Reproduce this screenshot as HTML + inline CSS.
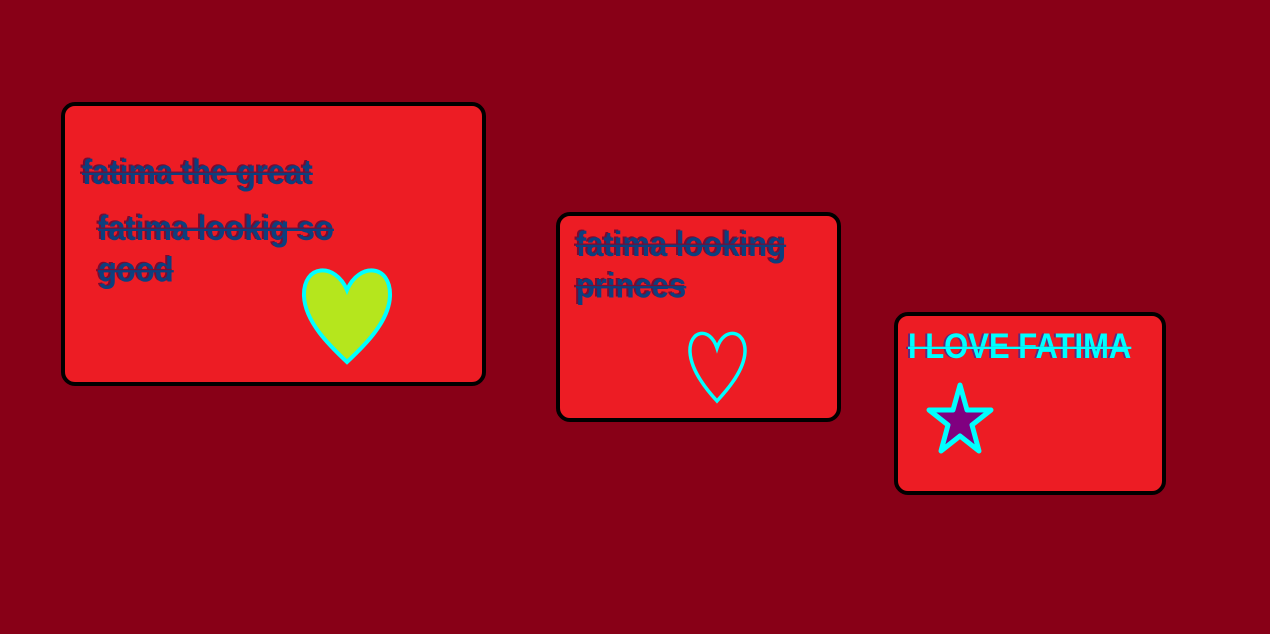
<!DOCTYPE html>
<html><head><style>
body{margin:0;width:1270px;height:634px;background:#880017;position:relative;overflow:hidden;font-family:"Liberation Sans",sans-serif}
.card{position:absolute;background:#ed1c24;border:4.5px solid #000;border-radius:14px;box-sizing:border-box}
.t{position:absolute;font-weight:bold;font-size:31px;color:#0d3f7e;text-decoration:line-through;text-decoration-thickness:2px;text-shadow:-2px -1px 0 #7a0a30;white-space:nowrap;transform-origin:0 0;transform:scaleY(1.15);line-height:36px}
</style></head><body>
<div class="card" style="left:61px;top:102px;width:425px;height:284px"></div>
<div class="card" style="left:556px;top:212px;width:285px;height:210px"></div>
<div class="card" style="left:894px;top:312px;width:272px;height:183px"></div>
<div class="t" style="left:82px;top:152px">fatima the great</div>
<div class="t" style="left:98px;top:208px;width:250px;white-space:normal">fatima lookig so good</div>
<div class="t" style="left:576px;top:224px;width:220px;white-space:normal">fatima looking princes</div>
<div class="t" style="left:908px;top:326px;color:#0ff;text-shadow:-2px 0 0 #5a2a80">I LOVE FATIMA</div>
<svg width="1270" height="634" style="position:absolute;left:0;top:0">
<path d="M347 290 C335 262 303 264 304 296 C305 322 330 346 347 362 C364 346 389 322 390 296 C391 264 359 262 347 290 Z" fill="#b5e61d" stroke="#0ff" stroke-width="4"/>
<path d="M717 348 C710 326 689 330 690 352 C691 370 705 388 717 401 C729 388 744 370 745 352 C746 330 724 326 717 348 Z" fill="none" stroke="#0ff" stroke-width="3.5"/>
<path d="M960 385 L967 410 L991 410 L972 425 L979 451 L960 436 L941 451 L948 425 L929 410 L953 410 Z" fill="#800080" stroke="#0ff" stroke-width="5" stroke-linejoin="round"/>
</svg>
</body></html>
